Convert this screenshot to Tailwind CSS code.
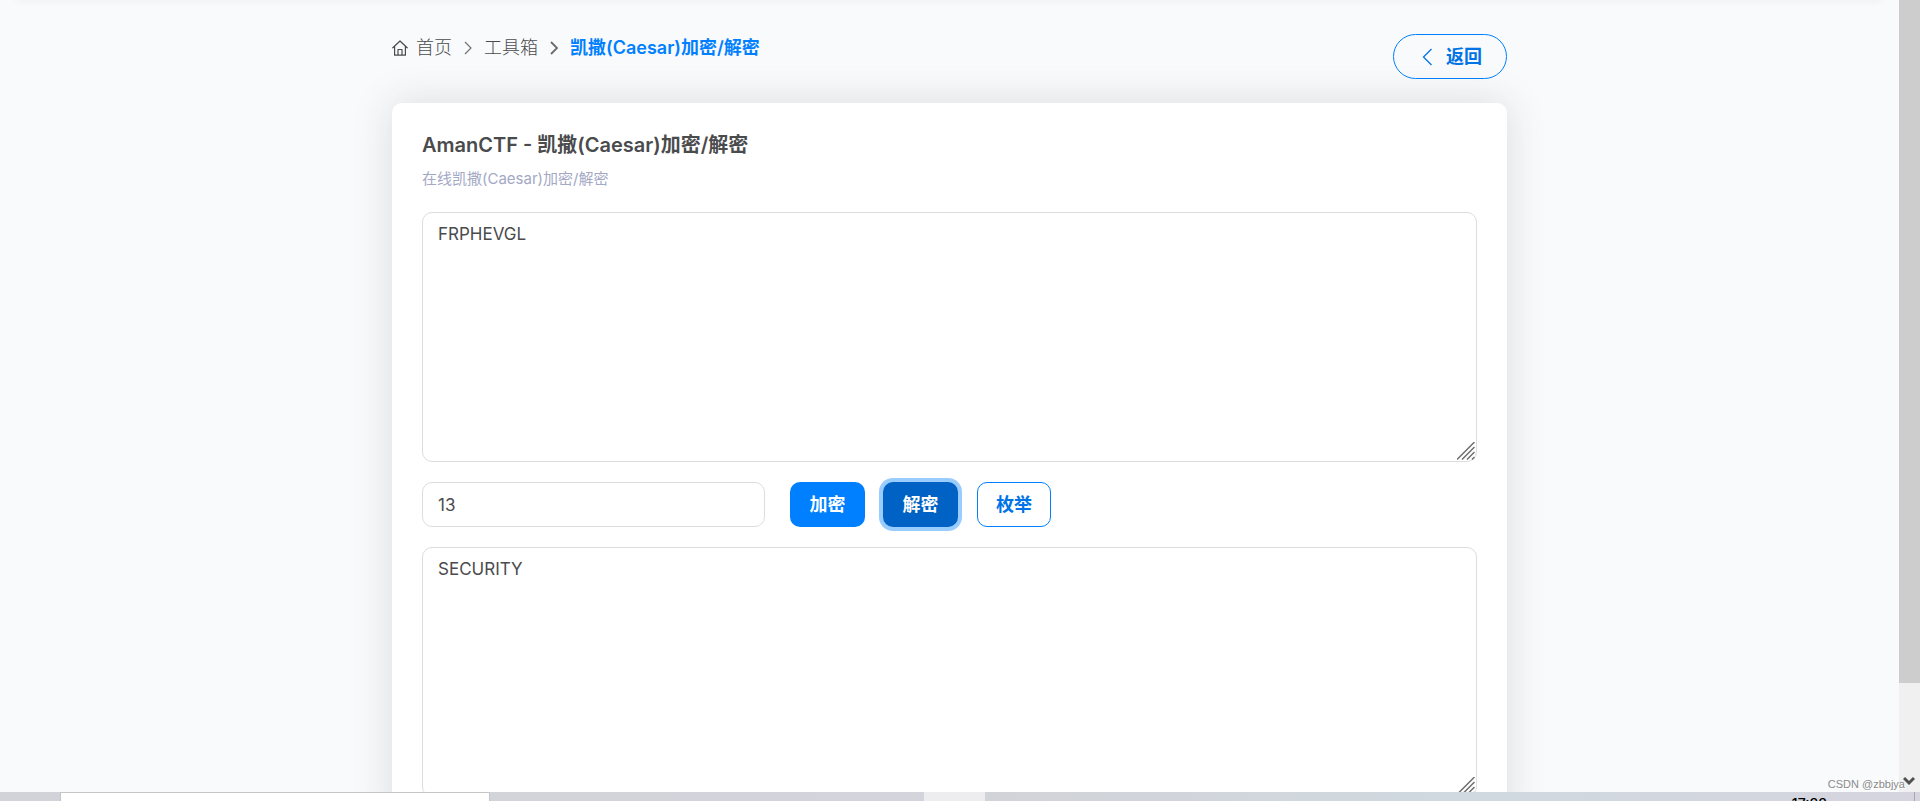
<!DOCTYPE html>
<html lang="zh-CN" class="h-full overflow-hidden">
<head>
<meta charset="utf-8">
<title>凯撒(Caesar)加密/解密</title>
<script src="https://cdn.jsdelivr.net/npm/@tailwindcss/browser@4"></script>
</head>
<body class="flex h-full flex-col overflow-hidden bg-[#f9fafc] font-['Inter','Noto_Sans_CJK_SC',sans-serif] text-[#4a4b4d]">
<div class="relative flex min-h-0 flex-1">
  <main class="relative min-w-0 flex-1 overflow-hidden">
    <div class="absolute inset-x-4 -top-2 h-2 rounded-full shadow-[0_0_10px_rgba(0,0,0,0.06)]"></div>
    <div class="mx-auto max-w-[1115px] pt-[34px]">
      <div class="flex items-start justify-between">
        <nav aria-label="breadcrumb" class="flex items-center text-lg leading-7">
          <a href="#" class="flex items-center gap-2">
            <svg class="size-4" viewBox="0 0 16 16" fill="none" stroke="currentColor" stroke-width="1.2" stroke-linejoin="round" stroke-linecap="round"><path d="M.8 7.8 8 1l7.2 6.8M2.6 6.5v8.7h10.8V6.5M6 15V9.5h4V15"/></svg>
            <span class="font-light">首页</span></a>
          <svg class="mx-[11px] h-3.5 w-2.5" viewBox="0 0 10 14" fill="none" stroke="#6b6c6e" stroke-width="1.1"><path d="M2 1l6 6-6 6"/></svg>
          <a href="#" class="font-light">工具箱</a>
          <svg class="mx-[11px] h-3.5 w-2.5" viewBox="0 0 10 14" fill="none" stroke="#6b6c6e" stroke-width="1.8"><path d="M2 1l6 6-6 6"/></svg>
          <span class="font-semibold text-[#0080ff]">凯撒(Caesar)加密/解密</span>
        </nav>
        <button type="button" class="flex h-[45px] w-[114px] items-center justify-center gap-3.5 rounded-full border border-[#0080ff] pl-1 text-lg font-bold text-[#0073e6]">
          <svg class="h-4.5 w-2.5" viewBox="0 0 10 18" fill="none" stroke="currentColor" stroke-width="1.3"><path d="M9.500 1 1.500 9l8 8"/></svg>返回</button>
      </div>
      <section class="mt-6 rounded-[10px] bg-white px-[30px] pt-[30px] pb-8 shadow-[0_0_40px_rgba(50,50,50,0.15)]">
        <h1 class="text-xl leading-6 font-semibold">AmanCTF - 凯撒(Caesar)加密/解密</h1>
        <p class="mt-2.5 text-[15px] leading-6 text-[#a3a8c5]">在线凯撒(Caesar)加密/解密</p>
        <div class="relative mt-[21px]">
          <textarea aria-label="输入" class="block h-[250px] w-full resize-none rounded-[10px] border border-[#dcdddf] px-[15px] py-[9px] text-[17px] leading-6">FRPHEVGL</textarea>
          <svg class="absolute right-0.5 bottom-0.5 size-[18px]" viewBox="0 0 18 18" fill="none" stroke="#707070" stroke-width="1.5"><path d="M0 17.5 17.5 0M5 17.5 17.5 5M10 17.5 17.5 10M15 17.5 17.5 15"/></svg>
        </div>
        <div class="my-5 flex">
          <input aria-label="位移" value="13" class="h-[45px] w-[343px] rounded-[10px] border border-[#dcdddf] px-[15px] text-[17px]">
          <button type="button" class="ml-[25px] h-[45px] w-[75px] rounded-[10px] bg-[#0080ff] text-lg font-bold text-white">加密</button>
          <button type="button" class="ml-[18px] h-[45px] w-[75px] rounded-[10px] bg-[#0062c4] text-lg font-bold text-white ring-4 ring-[#99ccff]">解密</button>
          <button type="button" class="ml-[19px] h-[45px] w-[74px] rounded-[10px] border border-[#0080ff] text-lg font-bold text-[#0073e6]">枚举</button>
        </div>
        <div class="relative">
          <textarea aria-label="输出" class="block h-[250px] w-full resize-none rounded-[10px] border border-[#dcdddf] px-[15px] py-[9px] text-[17px] leading-6">SECURITY</textarea>
          <svg class="absolute right-0.5 bottom-0.5 size-[18px]" viewBox="0 0 18 18" fill="none" stroke="#707070" stroke-width="1.5"><path d="M0 17.5 17.5 0M5 17.5 17.5 5M10 17.5 17.5 10M15 17.5 17.5 15"/></svg>
        </div>
      </section>
    </div>
  </main>
  <div class="flex w-[21px] flex-col justify-between bg-[#f0f0f0]">
    <div class="h-[86.2%] bg-[#cdcdcd]"></div>
    <svg class="mb-1 ml-1 h-3 w-3" viewBox="0 0 12 12" fill="none" stroke="#505050" stroke-width="3"><path d="M1 2l5 5 5-5"/></svg>
  </div>
  <span class="absolute right-[15px] bottom-0 font-['Liberation_Sans',sans-serif] text-[11px] leading-4 text-[#8b8b8b] [text-shadow:1px_1px_0_white]">CSDN @zbbjya</span>
</div>
<footer class="flex h-[9px] shrink-0 overflow-hidden bg-linear-to-r from-[#d2d3d8] via-[#d4d5dc] to-[#d3d4df]">
  <div class="w-[61px] border-r border-[#c4c4c6]"></div>
  <div class="w-[429px] border-t border-r border-[#c4c6c8] bg-white"></div>
  <div class="w-[434px]"></div>
  <div class="w-[61px] bg-[#ededef]"></div>
  <div class="flex flex-1 justify-end bg-linear-to-r from-[#d2d3d8] via-[#d0d9e0] to-[#d5d4df]">
    <time class="pt-1 pr-[87px] text-sm leading-4 font-medium text-black">17:33</time>
    <div class="w-[6px] border-l border-[#a8a8b0]"></div>
  </div>
</footer>
</body>
</html>
